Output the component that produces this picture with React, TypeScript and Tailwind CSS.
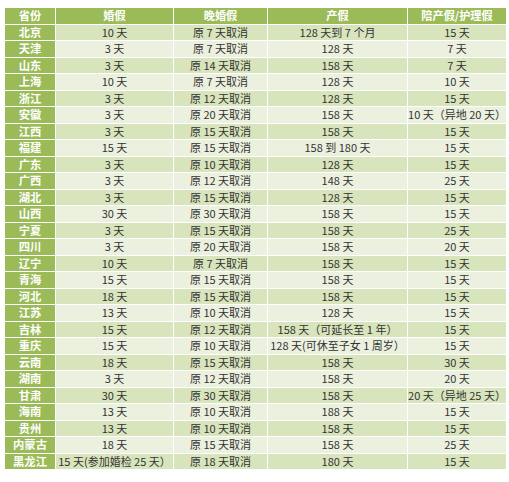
import React from "react";

const header = ["省份", "婚假", "晚婚假", "产假", "陪产假/护理假"];

const rows: string[][] = [
  ["北京", "10 天", "原 7 天取消", "128 天到 7 个月", "15 天"],
  ["天津", "3 天", "原 7 天取消", "128 天", "7 天"],
  ["山东", "3 天", "原 14 天取消", "158 天", "7 天"],
  ["上海", "10 天", "原 7 天取消", "128 天", "10 天"],
  ["浙江", "3 天", "原 12 天取消", "128 天", "15 天"],
  ["安徽", "3 天", "原 20 天取消", "158 天", "10 天（异地 20 天）"],
  ["江西", "3 天", "原 15 天取消", "158 天", "15 天"],
  ["福建", "15 天", "原 15 天取消", "158 到 180 天", "15 天"],
  ["广东", "3 天", "原 10 天取消", "128 天", "15 天"],
  ["广西", "3 天", "原 12 天取消", "148 天", "25 天"],
  ["湖北", "3 天", "原 15 天取消", "128 天", "15 天"],
  ["山西", "30 天", "原 30 天取消", "158 天", "15 天"],
  ["宁夏", "3 天", "原 15 天取消", "158 天", "25 天"],
  ["四川", "3 天", "原 20 天取消", "158 天", "20 天"],
  ["辽宁", "10 天", "原 7 天取消", "158 天", "15 天"],
  ["青海", "15 天", "原 15 天取消", "158 天", "15 天"],
  ["河北", "18 天", "原 15 天取消", "158 天", "15 天"],
  ["江苏", "13 天", "原 10 天取消", "128 天", "15 天"],
  ["吉林", "15 天", "原 12 天取消", "158 天（可延长至 1 年）", "15 天"],
  ["重庆", "15 天", "原 10 天取消", "128 天(可休至子女 1 周岁）", "15 天"],
  ["云南", "18 天", "原 15 天取消", "158 天", "30 天"],
  ["湖南", "3 天", "原 12 天取消", "158 天", "20 天"],
  ["甘肃", "30 天", "原 30 天取消", "158 天", "20 天（异地 25 天）"],
  ["海南", "13 天", "原 10 天取消", "188 天", "15 天"],
  ["贵州", "13 天", "原 10 天取消", "158 天", "15 天"],
  ["内蒙古", "18 天", "原 15 天取消", "158 天", "25 天"],
  ["黑龙江", "15 天(参加婚检 25 天）", "原 18 天取消", "180 天", "15 天"],
];

export default function App() {
  return (
    <div
      className="w-[509px] h-[482px] bg-white pt-[8px] pl-[5px]"
      style={{ fontFamily: '"Noto Sans CJK SC", "Noto Sans", sans-serif' }}
    >
      <div className="w-[497px] grid grid-cols-[50px_117px_93px_139px_98px] gap-x-px gap-y-px bg-white">
        {header.map((h, i) => (
          <div
            key={i}
            className="h-[15.5px] bg-[#9bbb59] text-white text-[11.2px] font-bold flex items-center justify-center leading-none whitespace-nowrap"
          >
            {h}
          </div>
        ))}
        {rows.map((r, ri) =>
          r.map((c, ci) =>
            ci === 0 ? (
              <div
                key={`${ri}-${ci}`}
                className="h-[15.5px] bg-[#9bbb59] text-white text-[11.3px] font-bold flex items-center justify-center leading-none whitespace-nowrap"
              >
                {c}
              </div>
            ) : (
              <div
                key={`${ri}-${ci}`}
                className={`h-[15.5px] ${
                  ri % 2 === 0 ? "bg-[#d8e4bc]" : "bg-[#ebf1de]"
                } text-[#333333] text-[11px] flex items-center justify-center leading-none whitespace-nowrap`}
              >
                {c}
              </div>
            )
          )
        )}
      </div>
    </div>
  );
}
